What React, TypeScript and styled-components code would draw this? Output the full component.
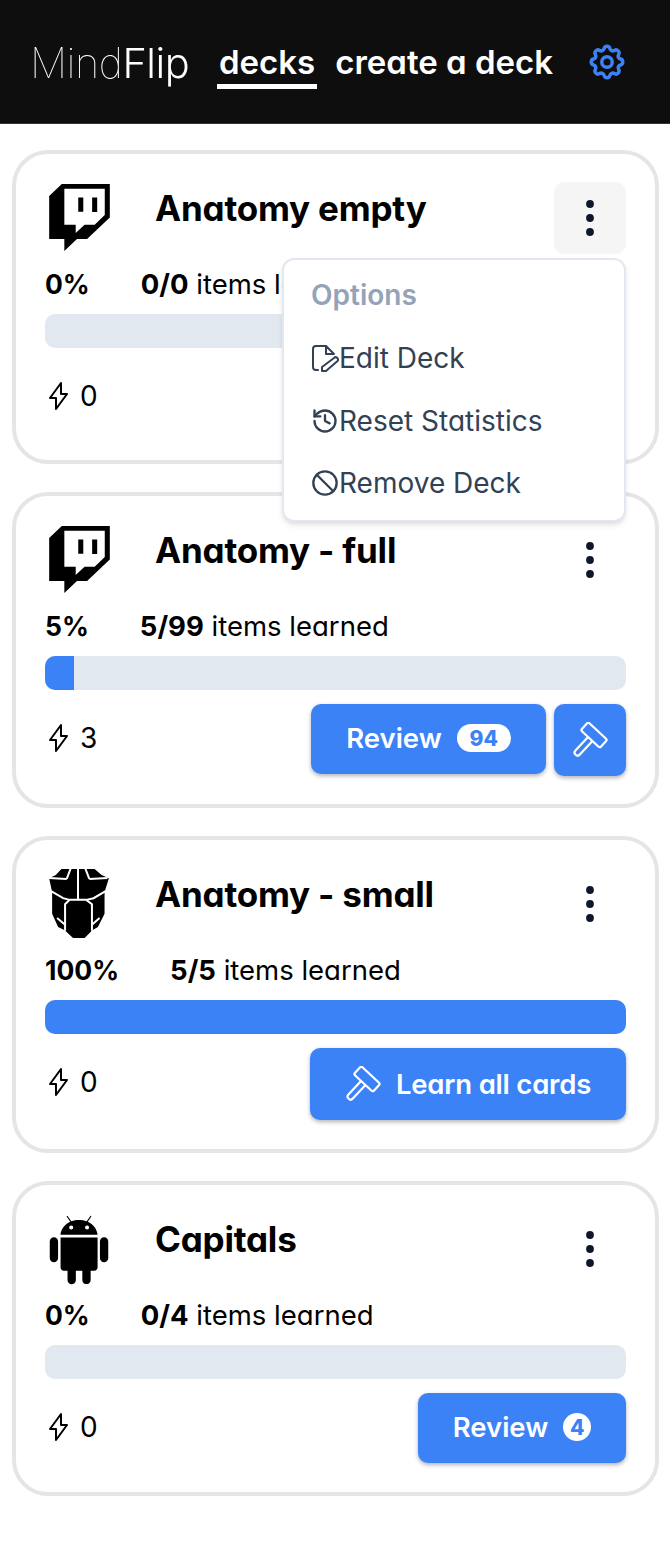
import React from 'react';
import styled, { createGlobalStyle } from 'styled-components';
import { FaTwitch } from 'react-icons/fa';
import { AiFillAndroid } from 'react-icons/ai';
import { TbSettings, TbDotsVertical } from 'react-icons/tb';
import { History, Ban } from 'lucide-react';

const Global = createGlobalStyle`
  html, body { margin: 0; padding: 0; background: #fff; }
  body { font-family: Inter, "Liberation Sans", sans-serif; color: #000; font-feature-settings: "cv11"; }
  * { box-sizing: border-box; }
`;

const Header = styled.header`
  height: 124px;
  background: #0e0e0e;
  display: flex;
  align-items: center;
  padding: 0 32px 0 30px;
  color: #fff;
  border-bottom: 1px solid #333;
`;
const Logo = styled.div`
  font-size: 41.5px;
  font-weight: 100;
  letter-spacing: -0.5px;
  width: 187px;
  flex: none;
  margin-top: 2px;
  will-change: transform;
  span { font-weight: 300; }
`;
const NavLink = styled.div<{ $active?: boolean }>`
  font-size: 33px;
  font-weight: 600;
  padding: 5px 2px 0;
  margin-right: 16px;
  line-height: 44px;
  border-bottom: 5px solid ${(p) => (p.$active ? '#fff' : 'transparent')};
`;
const Gear = styled.div`
  margin-left: auto;
  margin-right: 10px;
  color: #3b82f6;
  display: flex;
`;
const List = styled.main`
  padding: 26px 11px 0 12px;
  display: flex;
  flex-direction: column;
  gap: 28px;
`;
const Card = styled.section<{ $h: number }>`
  position: relative;
  height: ${(p) => p.$h}px;
  border: 4px solid #e5e5e5;
  border-radius: 36px;
  padding: 28px 29px 0 29px;
`;
const TopRow = styled.div`
  display: flex;
  height: 72px;
`;
const Logotype = styled.div`
  width: 70px;
  height: 70px;
  flex: none;
  margin-left: -1px;
  display: flex;
  align-items: center;
  justify-content: center;
  svg { flex-shrink: 0; }
`;
const AndroidLogo = styled(AiFillAndroid)`
  margin-top: 4px;
`;
const Title = styled.h2`
  margin: 0 0 0 41px;
  font-size: 35px;
  letter-spacing: -0.2px;
  font-weight: 700;
  line-height: 52px;
  flex: 1;
`;
const MenuButton = styled.div<{ $open?: boolean }>`
  width: 72px;
  height: 72px;
  border-radius: 10px;
  background: ${(p) => (p.$open ? '#f5f5f5' : 'transparent')};
  display: flex;
  align-items: center;
  justify-content: center;
  color: #0f172a;
`;
const Stats = styled.div`
  display: flex;
  font-size: 27.5px;
  line-height: 40px;
  margin-top: 10px;
  white-space: nowrap;
  b { font-weight: 700; }
`;
const Percent = styled.b`
  font-size: 26.5px;
  margin-right: 51px;
`;
const Bar = styled.div`
  height: 34px;
  border-radius: 10px;
  background: #e2e8f0;
  margin-top: 10px;
  overflow: hidden;
`;
const Fill = styled.div`
  height: 100%;
  background: #3b82f6;
`;
const Bottom = styled.div`
  display: flex;
  align-items: flex-start;
  justify-content: space-between;
  margin-top: 14px;
`;
const Streak = styled.div`
  display: flex;
  align-items: center;
  gap: 12px;
  height: 68px;
  font-size: 28px;
  svg { margin-left: 4px; }
`;
const Actions = styled.div`
  display: flex;
  gap: 8px;
`;
const Btn = styled.div<{ $w: number }>`
  width: ${(p) => p.$w}px;
  height: 70px;
  padding-bottom: 2px;
  background: #3b82f6;
  color: #fff;
  border-radius: 10px;
  display: flex;
  align-items: center;
  justify-content: center;
  gap: 15px;
  font-size: 27.5px;
  font-weight: 600;
  box-shadow: 0 2px 4px rgba(0, 0, 0, 0.3);
`;
const IconBtn = styled(Btn)`
  height: 72px;
  padding-bottom: 0;
  letter-spacing: -0.2px;
`;
const Badge = styled.span<{ $w: number }>`
  width: ${(p) => p.$w}px;
  height: 28px;
  border-radius: 14px;
  background: #fff;
  color: #3b82f6;
  font-size: 21px;
  font-weight: 800;
  display: flex;
  align-items: center;
  justify-content: center;
`;
const Dropdown = styled.div`
  position: absolute;
  top: 104px;
  right: 29px;
  width: 344px;
  height: 264px;
  background: #fff;
  border: 2px solid #e2e8f0;
  border-radius: 12px;
  box-shadow: 0 4px 6px -1px rgba(0, 0, 0, 0.1), 0 2px 4px -2px rgba(0, 0, 0, 0.1);
  padding: 14px 27px;
  z-index: 2;
`;
const MenuTitle = styled.div`
  font-size: 28px;
  font-weight: 600;
  color: #94a3b8;
  line-height: 42px;
  margin-bottom: 21px;
`;
const MenuItem = styled.div`
  display: flex;
  align-items: center;
  font-size: 28px;
  color: #334155;
  height: 42px;
  margin-bottom: 20.5px;
  white-space: nowrap;
`;

const BoltIcon = () => (
  <svg width="19" height="30" viewBox="0 0 19 30" fill="none" stroke="currentColor" strokeWidth="2" strokeLinejoin="round" strokeLinecap="round">
    <path d="M12 2v11h6L7 28V17H1z" />
  </svg>
);

const EditIcon = () => (
  <svg width="28" height="28" viewBox="0 0 28 28" fill="none" stroke="currentColor" strokeWidth="2" strokeLinecap="round" strokeLinejoin="round">
    <path d="M15 2H5a3 3 0 0 0-3 3v18a3 3 0 0 0 3 3h2" />
    <path d="M15 2l8 8h-8z" />
    <path d="M23 14a2.3 2.3 0 0 1 3.3 3.3L15 27h-4v-4z" />
  </svg>
);

const HammerIcon = () => (
  <svg width="36" height="36" viewBox="0 0 36 36" fill="none" stroke="currentColor" strokeWidth="2.2" strokeLinejoin="round">
    <g transform="translate(22 13) rotate(43)">
      <rect x="-13" y="-5.5" width="26" height="11" rx="2" />
      <path d="M-3 5.5V24a3 3 0 0 0 6 0V5.5" />
    </g>
  </svg>
);

const BotIcon = () => (
  <svg width="60" height="69" viewBox="88 30 180 208">
    <polygon fill="#000" points="125,30 225,30 246,48 268,58 255,100 255,165 235,205 218,215 195,238 160,238 135,215 115,205 97,165 97,100 88,58 108,48" />
    <g fill="none" stroke="#fff" strokeWidth="6">
      <path d="M153 28L141 60 M175 28V124 M197 28L209 60" />
      <path d="M86 57L141 60 M264 57L209 60" />
      <path d="M94 97L130 118 150 123 200 123 222 118 258 97" />
      <path d="M150 123L136 136V216 M200 123L217 136V216" />
      <path d="M112 178L136 198 M240 178L217 198" />
    </g>
  </svg>
);

type D = {
  title: string; pct: string; count: string; width: number; streak: number; height: number;
  icon: 'twitch' | 'bot' | 'android'; children?: React.ReactNode; open?: boolean;
};

const Deck = ({ title, pct, count, width, streak, height, icon, children, open }: D) => (
  <Card $h={height}>
    <TopRow>
      <Logotype>
        {icon === 'twitch' && <FaTwitch size={67} />}
        {icon === 'bot' && <BotIcon />}
        {icon === 'android' && <AndroidLogo size={78} />}
      </Logotype>
      <Title>{title}</Title>
      <MenuButton $open={open}><TbDotsVertical size={48} strokeWidth={1.9} /></MenuButton>
    </TopRow>
    <Stats>
      <Percent>{pct}</Percent>
      <span><b>{count}</b> items learned</span>
    </Stats>
    <Bar>{width > 0 && <Fill style={{ width: `${width}%` }} />}</Bar>
    <Bottom>
      <Streak><BoltIcon />{streak}</Streak>
      <Actions>{children}</Actions>
    </Bottom>
    {open && (
      <Dropdown>
        <MenuTitle>Options</MenuTitle>
        <MenuItem><EditIcon />Edit Deck</MenuItem>
        <MenuItem><History size={28} strokeWidth={2} />Reset Statistics</MenuItem>
        <MenuItem><Ban size={28} strokeWidth={2} />Remove Deck</MenuItem>
      </Dropdown>
    )}
  </Card>
);

export default function App() {
  return (
    <>
      <Global />
      <Header>
        <Logo>Mind<span>Flip</span></Logo>
        <NavLink $active>decks</NavLink>
        <NavLink>create a deck</NavLink>
        <Gear><TbSettings size={42} /></Gear>
      </Header>
      <List>
        <Deck title="Anatomy empty" pct="0%" count="0/0" width={0} streak={0} height={314} icon="twitch" open />
        <Deck title="Anatomy - full" pct="5%" count="5/99" width={5} streak={3} height={316} icon="twitch">
          <Btn $w={235}>Review<Badge $w={54}>94</Badge></Btn>
          <IconBtn $w={72}><HammerIcon /></IconBtn>
        </Deck>
        <Deck title="Anatomy - small" pct="100%" count="5/5" width={100} streak={0} height={317} icon="bot">
          <IconBtn $w={316}><HammerIcon />Learn all cards</IconBtn>
        </Deck>
        <Deck title="Capitals" pct="0%" count="0/4" width={0} streak={0} height={315} icon="android">
          <Btn $w={208}>Review<Badge $w={28}>4</Badge></Btn>
        </Deck>
      </List>
    </>
  );
}
